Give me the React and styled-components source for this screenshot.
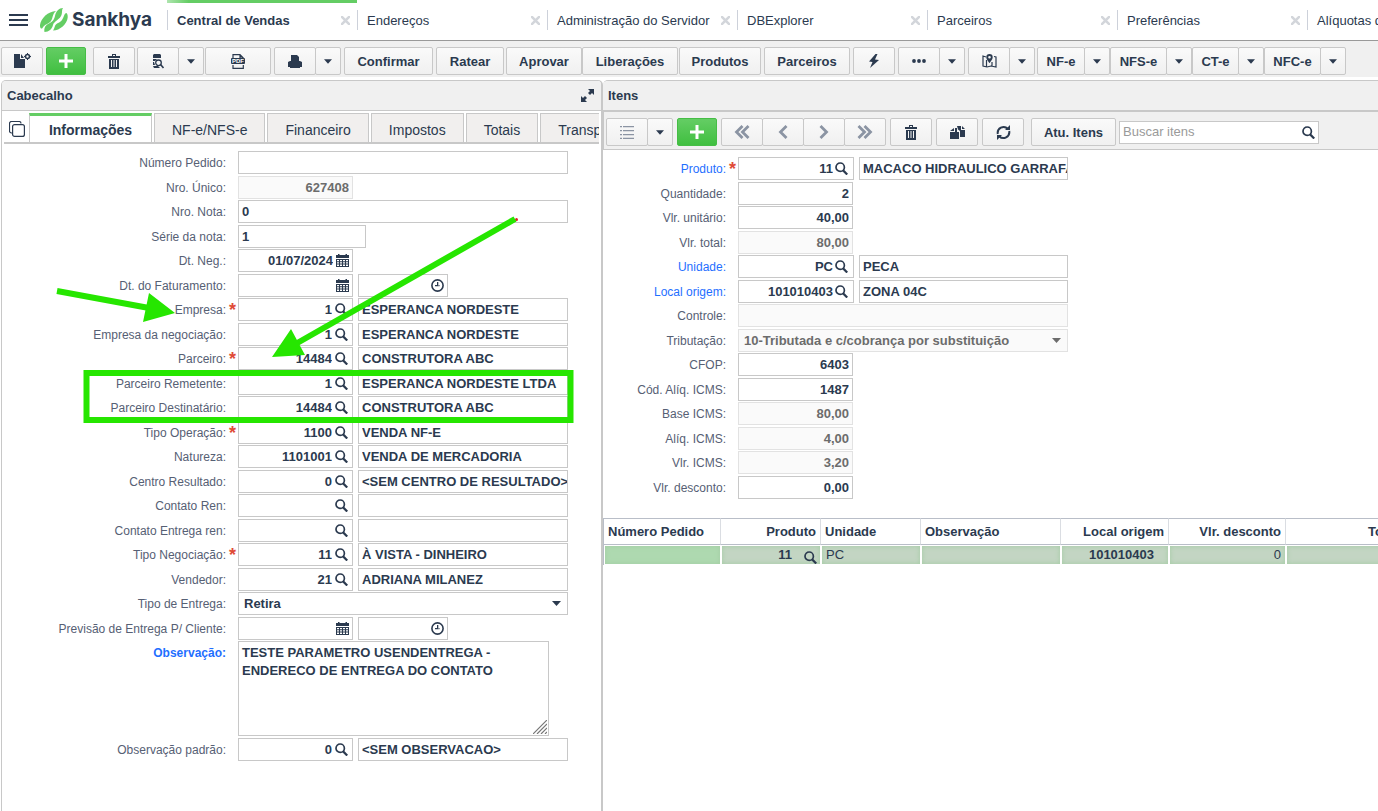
import React from "react";
import styled, { createGlobalStyle, css } from "styled-components";

const ink = "#2b3a4f";
const line = "#c8c8c8";

const GlobalStyle = createGlobalStyle`
  * { box-sizing: border-box; }
  body {
    margin: 0;
    background: #fff;
    color: ${ink};
    font: 13px/18px "Liberation Sans", Arial, sans-serif;
    overflow-x: hidden;
  }
  button, input, select, textarea { font: inherit; color: inherit; }
  svg { display: block; flex: none; }
`;

/* ---------- icons ---------- */

const Icon = ({ w = 16, h = w, box, children }) => (
  <svg width={w} height={h} viewBox={box || `0 0 ${w} ${h}`} fill="currentColor" aria-hidden="true">
    {children}
  </svg>
);
const Menu = () => (
  <Icon w={19} h={14}><path d="M0 1h19v2H0zM0 6h19v2H0zM0 11h19v2H0z" /></Icon>
);
const LogoMark = () => (
  <svg width="28" height="24" viewBox="0 0 28 24" fill="#64cd64" aria-hidden="true">
    <path d="M16 3C8 3.500 1 10 0 17c-.3 3 1.500 4.500 2.500 3C4.500 16 9 16 11 13c2-3 1-6.500 5-10z" />
    <path d="M23 0c-4 0-7 3-8 8-1 4.500-3 6-7 8-3.500 2-4 5-3.500 8 4.500 0 7.500-3 8.500-7 1-4 7-5.500 8.500-10C22.500 4 21.500 2 23 0z" />
    <path d="M26 5c-2 1-2 4-4 7s-6 3-7 6c-.7 2-1 3-2 4.500C20 22.500 27 16 27.700 9.500 28 7 27 5 26 5z" />
  </svg>
);
const Plus = () => (
  <Icon w={14}><path d="M5.500 0h3v5.500h5.500v3h-5.500v5.500h-3v-5.500H0v-3h5.500z" /></Icon>
);
const NewDoc = () => (
  <Icon w={17} h={16}>
    <path d="M0 1h6v5h5v9H0zM7 1l3 4H7z" />
    <circle cx="13.500" cy="3.500" r="2" fill="none" stroke="currentColor" strokeWidth="1.600" />
    <path d="M13 0h1v2h-1zM13 5h1v2h-1zM10 3h2v1h-2zM15 3h2v1h-2z" />
  </Icon>
);
const Trash = () => (
  <Icon w={12} h={15}>
    <path d="M4 0h4v2h4v2H0V2h4zM5 1v1h2V1z" fillRule="evenodd" />
    <path fillRule="evenodd" d="M1 5h10v10H1zM3 6v7h1V6zM5.500 6v7h1V6zM8 6v7h1V6z" />
  </Icon>
);
const DocSearch = () => (
  <Icon w={12} h={15}>
    <path d="M2 0h6l1 1v3H1V1zM1 5h4l-2 2H1zM1 8h1l1 3H1zM1 12h5l2 2H2z" />
    <circle cx="6.500" cy="8.800" r="2.800" fill="none" stroke="currentColor" strokeWidth="1.300" />
    <path d="M8.500 10.500l3 3.500" stroke="currentColor" strokeWidth="1.600" />
  </Icon>
);
const PdfWrap = styled.span`
  display: grid;
  place-items: center;
  > * { grid-area: 1 / 1; }
`;
const PdfTag = styled.span`
  background: ${ink};
  color: #fff;
  font-size: 6px;
  line-height: 6px;
  border-radius: 1px;
  padding: 0 1px;
`;
const Pdf = () => (
  <PdfWrap>
    <Icon w={12} h={15}>
      <path d="M1 5V.700h7L11.300 4v2M1 11v3.300h10.300V11M8 1v3h3" fill="none" stroke="currentColor" strokeWidth="1.200" />
    </Icon>
    <PdfTag>PDF</PdfTag>
  </PdfWrap>
);
const Printer = () => (
  <Icon w={14} h={13}>
    <path d="M3 0h6l2 2v4H3zM0 7l2-1h10l2 1v5h-2v-2H2v2H0z" />
    <path d="M2 11h10v2H2zM2 9h10v3H2z" />
  </Icon>
);
const Bolt = () => <Icon w={10} h={14}><path d="M6.500 0L0 7.500l3.500.500L1 14l9-8-4-.500L8.500 0z" /></Icon>;
const Dots = () => (
  <Icon w={14} h={4}><circle cx="2" cy="2" r="1.900" /><circle cx="7" cy="2" r="1.900" /><circle cx="12" cy="2" r="1.900" /></Icon>
);
const MapIcon = () => (
  <Icon w={15} h={14}>
    <path d="M4 3L1 2v10l4 1 4-1 5 1V3l-2-.500M4.500 6v7M10 8v4.500" fill="none" stroke="currentColor" strokeWidth="1.200" />
    <path fillRule="evenodd" d="M7.500 0a3.200 3.200 0 0 1 3.200 3.200C10.700 5.500 7.500 9 7.500 9S4.300 5.500 4.300 3.200A3.200 3.200 0 0 1 7.500 0zm0 2a1.300 1.300 0 1 0 0 2.600 1.300 1.300 0 0 0 0-2.600z" />
  </Icon>
);
const Caret = ({ w = 9 }) => <Icon w={w} h={5} box="0 0 9 5"><path d="M0 0h9L4.500 5z" /></Icon>;
const Magnifier = () => (
  <Icon w={13}>
    <circle cx="5.200" cy="5.200" r="4.200" fill="none" stroke="currentColor" strokeWidth="1.700" />
    <path d="M8 8.200l4.200 4.300" stroke="currentColor" strokeWidth="2.300" />
  </Icon>
);
const Calendar = () => (
  <Icon w={13}>
    <path d="M2 0h1.500v1h6V0H11v1h2v3H0V1h2z" />
    <path fillRule="evenodd" d="M0 5h13v8H0zM1 6v1.300h2V6zM4 6v1.300h2V6zM7 6v1.300h2V6zM10 6v1.300h2V6zM1 8.300v1.300h2V8.300zM4 8.300v1.300h2V8.300zM7 8.300v1.300h2V8.300zM10 8.300v1.300h2V8.300zM1 10.600V12h2v-1.400zM4 10.600V12h2v-1.400zM7 10.600V12h2v-1.400zM10 10.600V12h2v-1.400z" />
  </Icon>
);
const Clock = () => (
  <Icon w={13}>
    <circle cx="6.500" cy="6.500" r="5.600" fill="none" stroke="currentColor" strokeWidth="1.600" />
    <path d="M6 3h1.300v4.300H4V6h2z" /><path d="M7 6h2v1.300H7z" opacity=".5" />
  </Icon>
);
const ListIcon = () => (
  <Icon w={14} h={13}>
    <path d="M0 0h2v1.300H0zM3 0h11v1.300H3zM0 4h2v1.300H0zM3 4h11v1.300H3zM0 8h2v1.300H0zM3 8h11v1.300H3zM0 11.700h2V13H0zM3 11.700h11V13H3z" />
  </Icon>
);
const Chevron = ({ dir, double }) => (
  <Icon w={double ? 16 : 10} h={14}>
    <g fill="none" stroke="currentColor" strokeWidth="2.800" transform={dir === "right" ? `translate(${double ? 16 : 10} 0) scale(-1 1)` : undefined}>
      <path d="M8.500 1L2.500 7l6 6" />
      {double && <path d="M14.500 1l-6 6 6 6" />}
    </g>
  </Icon>
);
const CopyFiles = () => (
  <Icon w={15} h={13}>
    <path d="M4 2v3H0zM5 2h2v4h2v7H0V6h5z" />
    <path d="M7 0h4v4h4v7h-5V5L8 3.500zM12 0l3 3h-3z" />
  </Icon>
);
const Refresh = () => (
  <Icon w={15}>
    <path d="M1.800 9a5.900 5.900 0 0 1 10-5.200M13.200 6a5.900 5.900 0 0 1-10 5.200" fill="none" stroke="currentColor" strokeWidth="2" />
    <path d="M9 5h5V0zM6 10H1v5z" />
  </Icon>
);
const Expand = () => (
  <Icon w={13}>
    <path d="M7 0h6v6l-2-2-2 2-2-2 2-2zM6 13H0V7l2 2 2-2 2 2-2 2z" />
  </Icon>
);
const Windows = () => (
  <Icon w={16}>
    <g fill="none" stroke="currentColor" strokeWidth="1.200">
      <path d="M3.500 12H2.500a2 2 0 0 1-2-2V2.500a2 2 0 0 1 2-2H10a2 2 0 0 1 2 2" />
      <rect x="3.600" y="3.600" width="11.800" height="11.800" rx="2" fill="#fff" />
    </g>
  </Icon>
);
const Close = () => (
  <Icon w={9}><path d="M0 0l9 9M9 0L0 9" stroke="currentColor" strokeWidth="2.600" /></Icon>
);
const Grip = () => (
  <Icon w={14}><path d="M0 14L14 0M4 14L14 4M8 14l6-6M12 14l2-2" stroke="#777" strokeWidth="1.200" /></Icon>
);

/* ---------- page frame ---------- */

const Page = styled.div`
  position: relative;
  display: flex;
  flex-direction: column;
  min-height: 100vh;
  overflow: hidden;
`;
const TopBar = styled.header`
  display: flex;
  height: 41px;
  border-bottom: 1px solid #999;
`;
const Brand = styled.div`
  display: flex;
  align-items: center;
  flex: none;
  width: 167px;
  padding-left: 9px;
`;
const IconButton = styled.button`
  display: flex;
  flex: none;
  padding: 0;
  border: 0;
  background: none;
  color: ${(p) => p.$color || ink};
`;
const BrandLink = styled.a`
  display: flex;
  align-items: center;
  gap: 4px;
  margin-left: 12px;
  color: ${ink};
  text-decoration: none;
  font: 700 19px/22px Inter, "Liberation Sans", sans-serif;
`;
const PageTabs = styled.nav`
  display: flex;
  min-width: 0;
`;
const PageTab = styled.div`
  display: flex;
  flex: none;
  width: 190px;
  height: 40px;
  border-top: 3px solid transparent;
  ${(p) => p.$active && css`
    border-image: linear-gradient(90deg, #b9e8b9, #64cd64 24px) 3;
    font-weight: bold;
  `}
`;
const PageTabBody = styled.div`
  display: flex;
  flex: 1;
  align-items: center;
  justify-content: space-between;
  height: 20px;
  margin-top: 7px;
  padding: 0 7px 0 9px;
  border-left: 1px solid #cdd1da;
  white-space: nowrap;
  a { padding-top: 2px; color: inherit; text-decoration: none; }
`;

/* ---------- toolbars ---------- */

const Toolbar = styled.div`
  display: flex;
  align-items: center;
  background: #f0f0f0;
  white-space: nowrap;
  padding: ${(p) => (p.$inner ? "6px 0 3px 2px" : "6px 0 2px 1px")};
  border: 0 solid ${line};
  border-width: ${(p) => (p.$inner ? "1px 0 1px 1px" : "0")};
`;
const ToolButton = styled.button`
  display: flex;
  align-items: center;
  justify-content: center;
  flex: none;
  height: 28px;
  min-width: ${(p) => p.$w || 42}px;
  margin-left: ${(p) => p.$before || 0}px;
  padding: ${(p) => (p.$w ? 2 : 0)}px 0 0;
  border: 1px solid ${line};
  border-radius: 2px;
  background: linear-gradient(#fafafa, #f0f0f0);
  font-weight: bold;
  color: ${(p) => (p.$muted ? "#8b94a3" : ink)};
  ${(p) => p.$wide && css`min-width: 66px;`}
  ${(p) => p.$green && css`
    min-width: 40px;
    border-color: #46bd46;
    background: linear-gradient(#64cd64, #40bf40);
    color: #fff;
  `}
`;
const Split = styled.div`
  display: flex;
  flex: none;
  margin-left: ${(p) => p.$before || 0}px;
  > button + button { margin-left: -1px; }
`;
const CaretButton = styled(ToolButton)`
  min-width: 26px;
`;
const SplitButton = ({ label, before, w, muted, children }) => (
  <Split $before={before}>
    <ToolButton aria-label={label} $w={w} $muted={muted}>{children}</ToolButton>
    <CaretButton aria-label={`${label}: opções`}><Caret w={8} /></CaretButton>
  </Split>
);
const SearchBox = styled.form`
  display: flex;
  align-items: center;
  width: 200px;
  height: 23px;
  margin-left: 3px;
  padding-right: 3px;
  border: 1px solid ${line};
  background: #fff;
  input {
    flex: 1;
    min-width: 0;
    padding: 0 3px;
    border: 0;
    outline: 0;
    background: none;
  }
  input::placeholder { color: #9a9a9a; }
`;

/* ---------- panels ---------- */

const Workspace = styled.main`
  display: grid;
  grid-template-columns: minmax(602px, 43%) minmax(0, 1fr);
  flex: 1;
  margin-top: 3px;
  padding-left: 1px;
`;
const Panel = styled.section`
  display: flex;
  flex-direction: column;
  min-width: 0;
  border: 1px solid ${line};
  border-width: ${(p) => (p.$left ? "1px 2px 0 1px" : "1px 0 0 0")};
  border-radius: ${(p) => (p.$left ? "5px 5px 0 0" : "5px 0 0 0")};
  overflow: hidden;
`;
const PanelHead = styled.div`
  display: flex;
  align-items: center;
  justify-content: space-between;
  height: 30px;
  padding: 0 7px 0 5px;
  background: #f0f0f0;
  border-bottom: 1px solid ${line};
  h2 { margin: 0; font-size: 13px; line-height: 18px; }
`;
const TabRow = styled.div`
  display: flex;
  align-items: flex-end;
  height: 33px;
  margin: 0 2px;
  border-bottom: 2px solid ${line};
  overflow: hidden;
`;
const TabTool = styled.div`
  flex: none;
  width: 25px;
  padding: 0 0 5px 5px;
`;
const Tab = styled.button`
  flex: none;
  height: 29px;
  margin-right: 2px;
  padding: 4px 17px 0;
  border: 1px solid ${line};
  border-bottom: 0;
  background: #f1efee;
  font-size: 14px;
  ${(p) => p.$active && css`
    height: 31px;
    min-width: 123px;
    margin-bottom: -2px;
    border-top: 3px solid #64cd64;
    padding-top: 0;
    background: #fff;
    font-weight: bold;
  `}
`;

/* ---------- forms ---------- */

const Form = styled.form`
  padding: ${(p) => (p.$left ? "7px 0 40px" : "7px 0 18px")};
`;
const Row = styled.div`
  display: grid;
  grid-template-columns: ${(p) => (p.$right ? 123 : 224)}px 12px 1fr;
  height: ${(p) => (p.$tall ? 97 : 24)}px;
  &:nth-child(odd) { height: ${(p) => (p.$tall ? 97 : 25)}px; }
`;
const Label = styled.label`
  line-height: 25px;
  font-size: 12px;
  text-align: right;
  white-space: nowrap;
  color: #566074;
  ${(p) => p.$link && css`color: #1f6fff;`}
  ${(p) => p.$strong && css`font-weight: bold;`}
`;
const Star = styled.span`
  padding-left: 3px;
  color: #df4b37;
  font: bold 18px/24px "Liberation Sans", Arial, sans-serif;
`;
const Fields = styled.div`
  display: flex;
  align-items: flex-start;
  gap: 5px;
`;
const sizes = { code: 115, serie: 128, time: 90, text: 210, full: 330, lookup: 116, name: 209 };
const iconSpace = { code: 4, lookup: 5 };
const Box = styled.div`
  display: flex;
  align-items: center;
  flex: none;
  width: ${(p) => sizes[p.$size]}px;
  height: 23px;
  padding-right: ${(p) => (p.$icon === "search" ? iconSpace[p.$size] : p.$icon ? 3 : 0)}px;
  border: 1px solid ${line};
  background: #fff;
  ${(p) => p.$off && css`
    border-color: #e2e2e2;
    background: #fafafa;
    color: #6c6c6c;
  `}
`;
const Input = styled.input`
  flex: 1;
  min-width: 0;
  height: 20px;
  padding: 0 ${(p) => (p.$end ? (p.$tight ? 2 : 3) : 0)}px 0 3px;
  border: 0;
  outline: 0;
  background: none;
  font-weight: bold;
  text-align: ${(p) => (p.$end ? "right" : "left")};
`;
const SelectBox = styled(Box)`
  padding-right: 6px;
  select {
    flex: 1;
    min-width: 0;
    padding: 1px 5px 0;
    border: 0;
    outline: 0;
    background: none;
    appearance: none;
    font-weight: bold;
    opacity: 1;
  }
`;
const NoteBox = styled.div`
  position: relative;
  width: 311px;
  height: 95px;
`;
const Note = styled.textarea`
  display: block;
  width: 100%;
  height: 100%;
  padding: 2px 3px;
  border: 1px solid ${line};
  outline: 0;
  resize: none;
  font-weight: bold;
`;
const NoteGrip = styled.span`
  position: absolute;
  right: 2px;
  bottom: 2px;
`;

const FieldIcon = { search: Magnifier, date: Calendar, time: Clock };
const iconNames = { search: "pesquisar", date: "calendário", time: "horário" };

const Field = ({ id, name, size, value = "", icon, end, off }) => {
  const Glyph = icon && FieldIcon[icon];
  return (
    <Box $size={size} $icon={icon} $off={off}>
      <Input id={id} aria-label={id ? undefined : name} defaultValue={value} $end={end} $tight={size === "lookup"} disabled={off} />
      {Glyph && <IconButton type="button" aria-label={`${name}: ${iconNames[icon]}`}><Glyph /></IconButton>}
    </Box>
  );
};
const Choice = ({ id, value, off }) => (
  <SelectBox $size="full" $off={off}>
    <select id={id} disabled={off} defaultValue={value}><option>{value}</option></select>
    <Caret />
  </SelectBox>
);

const header = [
  { label: "Número Pedido", kind: "full" },
  { label: "Nro. Único", kind: "code", value: "627408", off: true },
  { label: "Nro. Nota", kind: "full", value: "0" },
  { label: "Série da nota", kind: "serie", value: "1" },
  { label: "Dt. Neg.", kind: "date", value: "01/07/2024" },
  { label: "Dt. do Faturamento", kind: "datetime" },
  { label: "Empresa", kind: "lookup", value: "1", text: "ESPERANCA NORDESTE", need: true },
  { label: "Empresa da negociação", kind: "lookup", value: "1", text: "ESPERANCA NORDESTE" },
  { label: "Parceiro", kind: "lookup", value: "14484", text: "CONSTRUTORA ABC", need: true },
  { label: "Parceiro Remetente", kind: "lookup", value: "1", text: "ESPERANCA NORDESTE LTDA" },
  { label: "Parceiro Destinatário", kind: "lookup", value: "14484", text: "CONSTRUTORA ABC" },
  { label: "Tipo Operação", kind: "lookup", value: "1100", text: "VENDA NF-E", need: true },
  { label: "Natureza", kind: "lookup", value: "1101001", text: "VENDA DE MERCADORIA" },
  { label: "Centro Resultado", kind: "lookup", value: "0", text: "<SEM CENTRO DE RESULTADO>" },
  { label: "Contato Ren", kind: "lookup" },
  { label: "Contato Entrega ren", kind: "lookup" },
  { label: "Tipo Negociação", kind: "lookup", value: "11", text: "À VISTA - DINHEIRO", need: true },
  { label: "Vendedor", kind: "lookup", value: "21", text: "ADRIANA MILANEZ" },
  { label: "Tipo de Entrega", kind: "select", value: "Retira" },
  { label: "Previsão de Entrega P/ Cliente", kind: "datetime" },
  { label: "Observação", kind: "note", strong: true, link: true, value: "TESTE PARAMETRO USENDENTREGA -\nENDERECO DE ENTREGA DO CONTATO" },
  { label: "Observação padrão", kind: "lookup", value: "0", text: "<SEM OBSERVACAO>" },
];

const item = [
  { label: "Produto", kind: "lookup", value: "11", text: "MACACO HIDRAULICO GARRAFA", need: true, link: true },
  { label: "Quantidade", kind: "code", value: "2" },
  { label: "Vlr. unitário", kind: "code", value: "40,00" },
  { label: "Vlr. total", kind: "code", value: "80,00", off: true },
  { label: "Unidade", kind: "lookup", value: "PC", text: "PECA", link: true },
  { label: "Local origem", kind: "lookup", value: "101010403", text: "ZONA 04C", link: true },
  { label: "Controle", kind: "full", off: true },
  { label: "Tributação", kind: "select", value: "10-Tributada e c/cobrança por substituição", off: true },
  { label: "CFOP", kind: "code", value: "6403" },
  { label: "Cód. Alíq. ICMS", kind: "code", value: "1487" },
  { label: "Base ICMS", kind: "code", value: "80,00", off: true },
  { label: "Alíq. ICMS", kind: "code", value: "4,00", off: true },
  { label: "Vlr. ICMS", kind: "code", value: "3,20", off: true },
  { label: "Vlr. desconto", kind: "code", value: "0,00" },
];

const Control = ({ f, id, right }) => {
  switch (f.kind) {
    case "lookup":
      return (
        <>
          <Field id={id} name={f.label} size={right ? "lookup" : "code"} value={f.value} icon="search" end />
          <Field name={`${f.label}: descrição`} size={right ? "name" : "text"} value={f.text} />
        </>
      );
    case "date":
      return <Field id={id} name={f.label} size="code" value={f.value} icon="date" end />;
    case "datetime":
      return (
        <>
          <Field id={id} name={f.label} size="code" icon="date" end />
          <Field name={`${f.label}: hora`} size="time" icon="time" end />
        </>
      );
    case "select":
      return <Choice id={id} value={f.value} off={f.off} />;
    case "note":
      return (
        <NoteBox>
          <Note id={id} defaultValue={f.value} />
          <NoteGrip><Grip /></NoteGrip>
        </NoteBox>
      );
    default:
      return <Field id={id} name={f.label} size={f.kind} value={f.value} off={f.off} end={f.kind === "code"} />;
  }
};

const FieldRows = ({ rows, right }) =>
  rows.map((f, i) => {
    const id = `${right ? "item" : "cab"}-${i}`;
    return (
      <Row key={id} $tall={f.kind === "note"} $right={right}>
        <Label htmlFor={id} $link={f.link} $strong={f.strong}>{f.label}:</Label>
        <Star>{f.need ? "*" : ""}</Star>
        <Fields><Control f={f} id={id} right={right} /></Fields>
      </Row>
    );
  });

/* ---------- items grid ---------- */

const GridWrap = styled.div`
  overflow: hidden;
  border-left: 1px solid #b9bec8;
`;
const Grid = styled.table`
  width: 799px;
  min-width: 100%;
  table-layout: fixed;
  border-collapse: separate;
  border-spacing: 0;
  th {
    height: 27px;
    padding: 0 4px;
    border: 1px solid #b9bec8;
    border-width: 1px 0;
    border-right: 1px solid #dadde2;
    text-align: left;
    white-space: nowrap;
  }
  td {
    height: 20px;
    padding: 0 4px;
    border: 1px solid #fff;
    background: #c3d5c3;
    box-shadow: inset 0 0 5px #a3cda3;
    white-space: nowrap;
    line-height: 18px;
  }
  td:first-child { background: #aed9b0; }
  .end { text-align: right; }
`;
const LookupCell = styled.div`
  display: flex;
  align-items: center;
  justify-content: flex-end;
  gap: 12px;
  font-weight: bold;
  button { margin: 2px -1px -2px 0; }
`;
const Code = styled.b`
  padding-right: 10px;
`;
const columns = [
  ["Número Pedido", 117], ["Produto", 100, "end"], ["Unidade", 100], ["Observação", 140],
  ["Local origem", 108, "end"], ["Vlr. desconto", 117, "end"], ["Total", 117, "end"],
];

/* ---------- annotations drawn over the form ---------- */

const Marks = styled.svg`
  position: absolute;
  left: 0;
  top: 0;
  pointer-events: none;
`;
const Annotations = () => (
  <Marks width="600" height="440" viewBox="0 0 600 440" fill="#26e600" aria-hidden="true">
    <circle cx="516.500" cy="219.500" r="1.500" fill="#e02020" />
    <path d="M57 291l92 17M515 219L292 346" stroke="#26e600" strokeWidth="6" />
    <path d="M149 293l26 20-32 9zM272 357l19-28 14 26z" />
    <rect x="86.500" y="373" width="484" height="47" fill="none" stroke="#26e600" strokeWidth="6" />
  </Marks>
);

const pages = ["Central de Vendas", "Endereços", "Administração do Servidor", "DBExplorer", "Parceiros", "Preferências", "Alíquotas de ICMS"];

export default function App() {
  return (
    <Page>
      <GlobalStyle />
      <TopBar>
        <Brand>
          <IconButton aria-label="Menu"><Menu /></IconButton>
          <BrandLink href="#inicio"><LogoMark />Sankhya</BrandLink>
        </Brand>
        <PageTabs>
          {pages.map((p, i) => (
            <PageTab key={p} $active={i === 0}>
              <PageTabBody>
                <a href={`#aba-${i}`}>{p}</a>
                <IconButton $color="#d3d6db" aria-label={`Fechar ${p}`}><Close /></IconButton>
              </PageTabBody>
            </PageTab>
          ))}
        </PageTabs>
      </TopBar>

      <Toolbar>
        <ToolButton aria-label="Novo documento"><NewDoc /></ToolButton>
        <ToolButton $before={3} $green aria-label="Adicionar"><Plus /></ToolButton>
        <ToolButton $before={7} aria-label="Excluir"><Trash /></ToolButton>
        <SplitButton label="Consultar" before={2}><DocSearch /></SplitButton>
        <ToolButton $before={1} $wide aria-label="Gerar PDF"><Pdf /></ToolButton>
        <SplitButton label="Imprimir" before={3}><Printer /></SplitButton>
        <ToolButton $before={3} $w={89}>Confirmar</ToolButton>
        <ToolButton $before={3} $w={68}>Ratear</ToolButton>
        <ToolButton $before={2} $w={76}>Aprovar</ToolButton>
        <ToolButton $w={96}>Liberações</ToolButton>
        <ToolButton $before={1} $w={82}>Produtos</ToolButton>
        <ToolButton $before={3} $w={86}>Parceiros</ToolButton>
        <ToolButton $before={3} aria-label="Ações"><Bolt /></ToolButton>
        <SplitButton label="Mais opções" before={3}><Dots /></SplitButton>
        <SplitButton label="Mapa" before={3}><MapIcon /></SplitButton>
        <SplitButton label="NF-e" before={2} w={48}>NF-e</SplitButton>
        <SplitButton label="NFS-e" w={57}>NFS-e</SplitButton>
        <SplitButton label="CT-e" w={47}>CT-e</SplitButton>
        <SplitButton label="NFC-e" w={57}>NFC-e</SplitButton>
      </Toolbar>

      <Workspace>
        <Panel $left>
          <PanelHead>
            <h2>Cabecalho</h2>
            <IconButton aria-label="Expandir"><Expand /></IconButton>
          </PanelHead>
          <TabRow>
            <TabTool><IconButton aria-label="Janelas"><Windows /></IconButton></TabTool>
            <Tab $active>Informações</Tab>
            <Tab>NF-e/NFS-e</Tab>
            <Tab>Financeiro</Tab>
            <Tab>Impostos</Tab>
            <Tab>Totais</Tab>
            <Tab>Transporte</Tab>
          </TabRow>
          <Form $left><FieldRows rows={header} /></Form>
        </Panel>

        <Panel>
          <PanelHead><h2>Itens</h2></PanelHead>
          <Toolbar $inner>
            <SplitButton label="Modo grade" muted><ListIcon /></SplitButton>
            <ToolButton $before={4} $green aria-label="Adicionar item"><Plus /></ToolButton>
            <Split $before={4}>
              <ToolButton $muted aria-label="Primeiro"><Chevron double /></ToolButton>
              <ToolButton $muted aria-label="Anterior"><Chevron /></ToolButton>
              <ToolButton $muted aria-label="Próximo"><Chevron dir="right" /></ToolButton>
              <ToolButton $muted aria-label="Último"><Chevron dir="right" double /></ToolButton>
            </Split>
            <ToolButton $before={4} aria-label="Excluir item"><Trash /></ToolButton>
            <ToolButton $before={4} aria-label="Duplicar item"><CopyFiles /></ToolButton>
            <ToolButton $before={4} aria-label="Atualizar"><Refresh /></ToolButton>
            <ToolButton $before={7} $w={85}>Atu. Itens</ToolButton>
            <SearchBox>
              <input aria-label="Buscar itens" placeholder="Buscar itens" />
              <IconButton type="button" aria-label="Buscar"><Magnifier /></IconButton>
            </SearchBox>
          </Toolbar>
          <Form><FieldRows rows={item} right /></Form>
          <GridWrap>
            <Grid>
              <colgroup>{columns.map(([c, w]) => <col key={c} width={w} />)}</colgroup>
              <thead>
                <tr>{columns.map(([c, , cls]) => <th key={c} className={cls}>{c}</th>)}</tr>
              </thead>
              <tbody>
                <tr>
                  <td />
                  <td><LookupCell>11<IconButton aria-label="Pesquisar produto"><Magnifier /></IconButton></LookupCell></td>
                  <td>PC</td>
                  <td />
                  <td className="end"><Code>101010403</Code></td>
                  <td className="end">0</td>
                  <td />
                </tr>
              </tbody>
            </Grid>
          </GridWrap>
        </Panel>
      </Workspace>
      <Annotations />
    </Page>
  );
}
